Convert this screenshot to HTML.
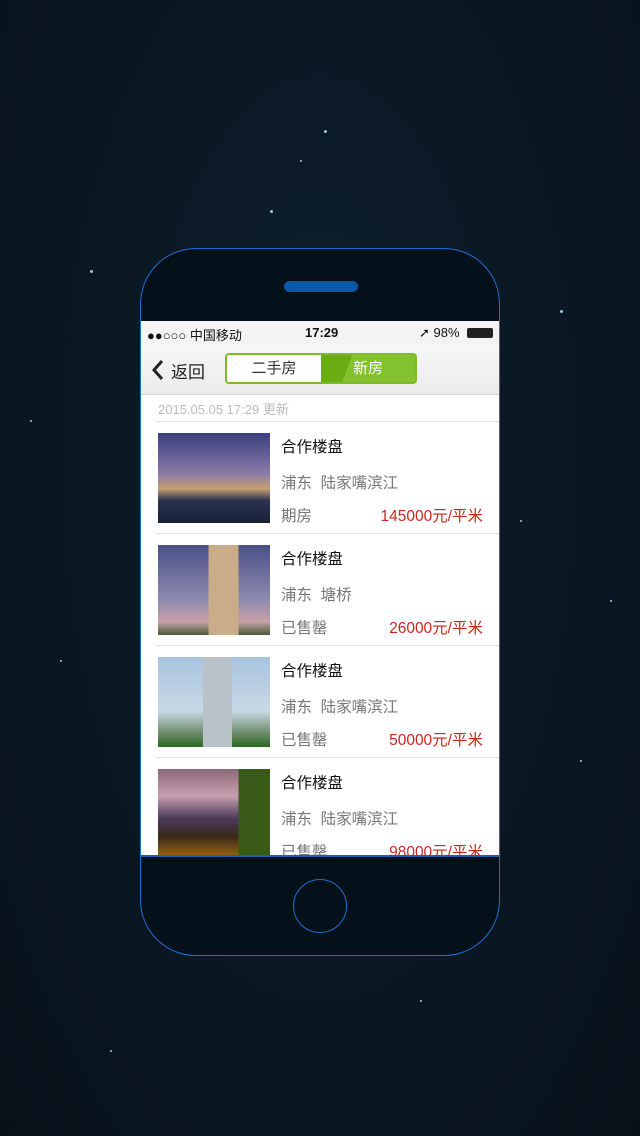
<!DOCTYPE html>
<html><head><meta charset="utf-8"><style>
*{margin:0;padding:0;box-sizing:border-box}
body{width:640px;height:1136px;overflow:hidden;position:relative;font-family:"Liberation Sans","Noto Sans CJK SC",sans-serif;
background:radial-gradient(ellipse at 50% 40%,#0d1e2c 0%,#0a1722 60%,#07111a 100%)}
.star{position:absolute;background:#9fc4e0;border-radius:50%}
.phone{position:absolute;left:140px;top:248px;width:360px;height:708px;border:1.5px solid #1b6fd6;border-radius:56px;background:#04101a;overflow:hidden}
.spk{position:absolute;left:143px;top:32px;width:74px;height:11px;border-radius:6px;background:#0b58a8}
.screen{position:absolute;left:0;top:72px;width:360px;height:536px;background:#fff;overflow:hidden;border-bottom:2px solid #1b5fb0}
.home{position:absolute;left:152px;top:630px;width:54px;height:54px;border:1.5px solid #1b6fd6;border-radius:50%}
.sb{height:24px;background:#f3f3f3;font-size:13px;color:#111;position:relative}
.sb span{position:absolute;top:4px}
.nav{height:50px;background:linear-gradient(#f6f6f6,#ececec);border-bottom:1px solid #d8d8d8;position:relative}
.seg{position:absolute;left:84px;top:8px;width:192px;height:31px;border:2px solid #7dbb2a;border-radius:4px;overflow:hidden;display:flex;font-size:15px}
.seg div{flex:1;text-align:center;line-height:27px}
.date{height:26px;font-size:13px;color:#bbb;padding:4px 0 0 17px}
.row{position:relative;height:112px;border-top:1px solid #ddd;margin-left:16px}
.img{position:absolute;left:1px;top:11px;width:112px;height:90px}
.t{position:absolute;left:124px;top:13px;font-size:15.5px;color:#111}
.l{position:absolute;left:124px;top:49px;font-size:15.5px;color:#777}
.s{position:absolute;left:124px;top:82px;font-size:15.5px;color:#777}
.p{position:absolute;right:18px;top:82px;font-size:15.5px;color:#c8281e}
</style></head><body>
<div class="star" style="left:90px;top:270px;width:3px;height:3px"></div>
<div class="star" style="left:560px;top:310px;width:3px;height:3px"></div>
<div class="star" style="left:300px;top:160px;width:2px;height:2px"></div>
<div class="star" style="left:520px;top:520px;width:2px;height:2px"></div>
<div class="star" style="left:60px;top:660px;width:2px;height:2px"></div>
<div class="star" style="left:580px;top:760px;width:2px;height:2px"></div>
<div class="star" style="left:270px;top:210px;width:3px;height:3px"></div>
<div class="star" style="left:420px;top:1000px;width:2px;height:2px"></div>
<div class="star" style="left:324px;top:130px;width:3px;height:3px"></div>
<div class="star" style="left:30px;top:420px;width:2px;height:2px"></div>
<div class="star" style="left:610px;top:600px;width:2px;height:2px"></div>
<div class="star" style="left:110px;top:1050px;width:2px;height:2px"></div>
<div class="phone">
<div class="spk"></div>
<div class="screen">
<div class="sb"><span style="left:6px">●●○○○ 中国移动</span><span style="left:164px;font-weight:bold">17:29</span><span style="left:278px">➚ 98%</span><span style="left:326px;top:7px;width:26px;height:10px;background:#222;border-radius:2px"></span></div>
<div class="nav"><svg style="position:absolute;left:10px;top:14px" width="14" height="22" viewBox="0 0 14 22"><path d="M11 2 L3 11 L11 20" stroke="#222" stroke-width="3" fill="none"/></svg><span style="position:absolute;left:30px;top:13px;font-size:17px;color:#222">返回</span>
<div class="seg"><div style="background:#fff;color:#333">二手房</div><div style="background:linear-gradient(110deg,#6aad12 30%,#84c130 30%);color:#fff">新房</div></div></div>
<div class="date">2015.05.05 17:29 更新</div>
<div class="row"><div class="img" style="background:linear-gradient(#3a3f7c,#8a7aa8 45%,#c4a070 62%,#2a3250 75%,#1a2038)"></div><div class="t">合作楼盘</div><div class="l">浦东&nbsp; 陆家嘴滨江</div><div class="s">期房</div><div class="p">145000元/平米</div></div>
<div class="row"><div class="img" style="background:linear-gradient(90deg,transparent 45%,#c8ad88 45%,#c8ad88 72%,transparent 72%),linear-gradient(#4a4f86,#8c8ab0 60%,#c8a0a8 85%,#4d5a3a)"></div><div class="t">合作楼盘</div><div class="l">浦东&nbsp; 塘桥</div><div class="s">已售罄</div><div class="p">26000元/平米</div></div>
<div class="row"><div class="img" style="background:linear-gradient(90deg,transparent 40%,#b8c2c8 40%,#b8c2c8 66%,transparent 66%),linear-gradient(#a7c4df,#c8d8e4 60%,#6c8a6a 85%,#2a6a20)"></div><div class="t">合作楼盘</div><div class="l">浦东&nbsp; 陆家嘴滨江</div><div class="s">已售罄</div><div class="p">50000元/平米</div></div>
<div class="row"><div class="img" style="background:linear-gradient(90deg,transparent 72%,#3a5a1a 72%),linear-gradient(#8a6a7a,#c8a0b0 30%,#4a3a5a 55%,#3a2a1a 75%,#a06a10)"></div><div class="t">合作楼盘</div><div class="l">浦东&nbsp; 陆家嘴滨江</div><div class="s">已售罄</div><div class="p">98000元/平米</div></div>
</div>
<div class="home"></div>
</div>
</body></html>
